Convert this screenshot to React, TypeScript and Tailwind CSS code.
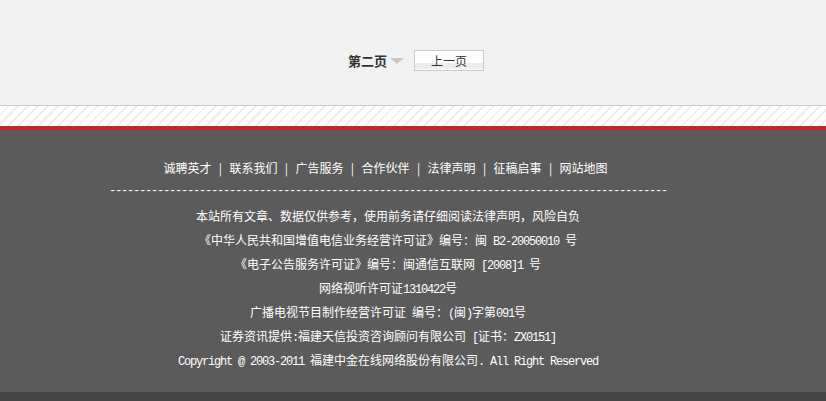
const M = ({ children }: { children: React.ReactNode }) => (
  <span className="font-['Liberation_Mono',monospace] tracking-[-1.2px] leading-none">{children}</span>
);

const links = ["诚聘英才", "联系我们", "广告服务", "合作伙伴", "法律声明", "征稿启事", "网站地图"];

export default function App() {
  return (
    <div className="w-[826px] h-[401px] overflow-hidden bg-[#f2f2f2] font-['Noto_Sans_CJK_SC',sans-serif]">
      {/* pager */}
      <div className="h-[105px] flex items-center justify-center pt-[16px]">
        <div className="flex items-center pl-[6px]">
          <span className="text-[13px] font-bold text-[#333] leading-none">第二页</span>
          <svg width="14" height="6" viewBox="0 0 14 6" className="ml-[3px] mt-[1px]">
            <polygon points="0,0 14,0 7,6" fill="#c6c6c6" />
          </svg>
          <button className="ml-[10px] w-[70px] h-[21px] border border-[#c9c9c9] bg-[linear-gradient(#ffffff_0%,#ffffff_62%,#ececec_66%,#ececec_90%,#ffffff_100%)] text-[12px] leading-none text-[#333] pt-[1px]">
            上一页
          </button>
        </div>
      </div>
      <div className="h-px bg-[#c9c9c9]" />
      <div className="h-[20px] bg-[repeating-linear-gradient(135deg,#ffffff_0px,#ffffff_5px,#efefef_5px,#efefef_7px)]" />
      <div className="h-[4px] bg-[#c4272b]" />

      {/* footer */}
      <div className="bg-[#5b5b5b] pt-[26px] pb-[20px]">
        <div className="w-[776px] text-center text-white text-[12px] leading-[24px] [&>div]:h-[24px]">
          <div className="flex justify-center pr-[5px]">
            {links.map((l, i) => (
              <span key={l} className="flex">
                {i > 0 && <span className="mx-[6px] w-[6px] text-center">|</span>}
                <a href="#">{l}</a>
              </span>
            ))}
          </div>
          <div className="font-['Liberation_Mono',monospace] text-[12px] tracking-[-1.2px] leading-[22px] whitespace-nowrap overflow-hidden">
            {"-".repeat(93)}
          </div>
          <div>本站所有文章、数据仅供参考，使用前务请仔细阅读法律声明，风险自负</div>
          <div>
            《中华人民共和国增值电信业务经营许可证》编号：闽<M>&nbsp;B2-20050010&nbsp;</M>号
          </div>
          <div>
            《电子公告服务许可证》编号：闽通信互联网<M>&nbsp;[2008]1&nbsp;</M>号
          </div>
          <div>
            网络视听许可证<M>1310422</M>号
          </div>
          <div>
            广播电视节目制作经营许可证<M>&nbsp;</M>编号：<M>(</M>闽<M>)</M>字第<M>091</M>号
          </div>
          <div>
            证券资讯提供<M>:</M>福建天信投资咨询顾问有限公司<M>&nbsp;[</M>证书：<M>ZX0151]</M>
          </div>
          <div>
            <M>Copyright @ 2003-2011&nbsp;</M>福建中金在线网络股份有限公司<M>. All Right Reserved</M>
          </div>
        </div>
      </div>
      <div className="h-[9px] bg-[#444444]" />
    </div>
  );
}
